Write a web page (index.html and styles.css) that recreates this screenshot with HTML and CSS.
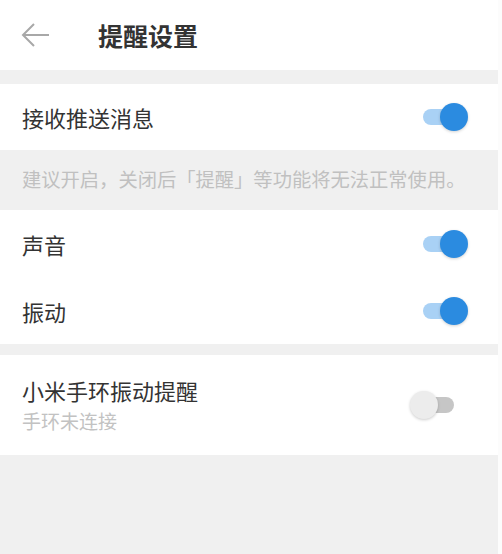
FILE: index.html
```html
<!DOCTYPE html>
<html lang="zh">
<head>
<meta charset="utf-8">
<link rel="stylesheet" href="styles.css">
</head>
<body>
<div class="page">
  <header class="header">
    <svg class="back" width="30" height="26" viewBox="0 0 30 26">
      <path d="M28 13H3M13 2L2 13l11 11" fill="none" stroke="#a8a8a8" stroke-width="2"/>
    </svg>
    <h1 class="title">提醒设置</h1>
  </header>
  <div class="gap g1"></div>
  <section class="group">
    <div class="row r1">
      <span class="label">接收推送消息</span>
      <span class="switch on"><span class="track"></span><span class="thumb"></span></span>
    </div>
  </section>
  <div class="note">建议开启，关闭后「提醒」等功能将无法正常使用。</div>
  <section class="group">
    <div class="row r2">
      <span class="label">声音</span>
      <span class="switch on"><span class="track"></span><span class="thumb"></span></span>
    </div>
    <div class="row r2">
      <span class="label">振动</span>
      <span class="switch on"><span class="track"></span><span class="thumb"></span></span>
    </div>
  </section>
  <div class="gap g2"></div>
  <section class="group">
    <div class="row r3">
      <div class="texts">
        <span class="label">小米手环振动提醒</span>
        <span class="sub">手环未连接</span>
      </div>
      <span class="switch off"><span class="track"></span><span class="thumb"></span></span>
    </div>
  </section>
</div>
</body>
</html>
```
FILE: styles.css
```css
html, body {
  margin: 0;
  padding: 0;
  background: #fcfcfc;
}
body {
  font-family: "Noto Sans CJK SC", "Noto Sans", sans-serif;
  color: #333;
}
.page {
  width: 498px;
  min-height: 554px;
  background: #f0f0f0;
}
.header {
  height: 70px;
  background: #fff;
  display: flex;
  align-items: center;
  padding-left: 21px;
}
.back {
  display: block;
}
.title {
  margin: 0 0 0 47px;
  font-size: 25px;
  font-weight: 700;
  color: #333;
  line-height: 1;
}
.gap.g1 { height: 14px; }
.gap.g2 { height: 11px; }
.group {
  background: #fff;
}
.row {
  display: flex;
  align-items: center;
  justify-content: space-between;
  padding: 0 30px 0 22px;
}
.row.r1 { height: 66px; }
.row.r2 { height: 67px; }
.row.r3 { height: 100px; }
.label {
  font-size: 22px;
  color: #333;
  line-height: 1;
}
.texts {
  display: flex;
  flex-direction: column;
  margin-top: 0;
}
.texts .label {
  line-height: 1.45;
}
.sub {
  font-size: 19px;
  color: #c2c2c2;
  line-height: 1.45;
}
.note {
  height: 60px;
  display: flex;
  align-items: center;
  padding-left: 22px;
  font-size: 19.3px;
  color: #c0c0c0;
  line-height: 1;
}
.switch {
  position: relative;
  width: 46px;
  height: 28px;
  display: block;
}
.switch .track {
  position: absolute;
  top: 6px;
  height: 16px;
  border-radius: 8px;
}
.switch .thumb {
  position: absolute;
  top: 0;
  width: 28px;
  height: 28px;
  border-radius: 50%;
}
.switch.on .track {
  left: 1px;
  width: 34px;
  background: #a9d1f5;
}
.switch.on .thumb {
  right: 0;
  background: #2b8be0;
  box-shadow: 0 1px 3px rgba(0, 0, 0, 0.18);
}
.switch.off {
  margin-right: 12px;
}
.switch.off .track {
  left: 12px;
  width: 32px;
  background: #c6c6c6;
}
.switch.off .thumb {
  left: 0;
  background: #ececec;
  box-shadow: 0 1px 3px rgba(0, 0, 0, 0.2);
}
```
